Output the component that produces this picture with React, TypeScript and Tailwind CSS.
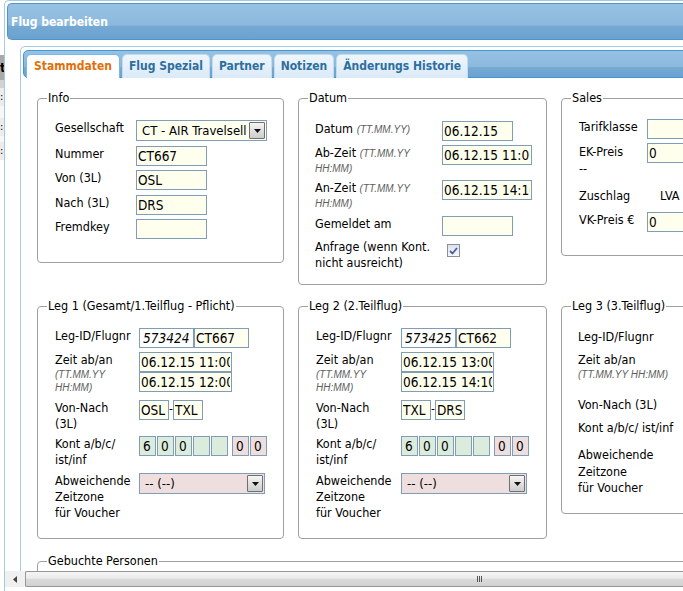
import React from "react";

const HINT = "font-['Liberation_Sans',Arial,sans-serif] [font-stretch:normal] italic text-[10px] text-[#5e5e5e]";
const BOX = "h-[20px] shrink-0 border border-[#7f9db9] px-[1px] text-[13.5px] leading-[18px] text-black outline-none";
const YEL = "bg-[#ffffee]";
const GRN = "bg-[#dcecdc]";
const PNK = "bg-[#efdede]";
const HEAD = "bg-[linear-gradient(to_bottom,#96c1e3_0%,#8bb9dd_60%,#74a9d3_64%,#6aa2cf_100%)]";

function Field({ value = "", className = "" }: { value?: string; className?: string }) {
  return <input readOnly value={value} className={`${BOX} ${className}`} />;
}

function Select({ text, className = "" }: { text: string; className?: string }) {
  return (
    <div className={`h-[21px] shrink-0 flex items-center border border-[#7f9db9] ${className}`}>
      <span className="flex-1 min-w-0 overflow-hidden whitespace-nowrap pl-[5px] text-[13px] leading-[19px]">{text}</span>
      <span className="w-[16px] h-[17px] mr-[1px] shrink-0 flex items-center justify-center border border-[#6f6f6f] rounded-[1px] bg-[linear-gradient(to_bottom,#f6f6f6,#e0e0e0_50%,#cdcdcd)]">
        <svg width="7" height="4" viewBox="0 0 7 4">
          <path d="M0 0h7L3.5 4z" fill="#111" />
        </svg>
      </span>
    </div>
  );
}

function Row({
  label,
  lw,
  className = "",
  children,
}: {
  label: React.ReactNode;
  lw: string;
  className?: string;
  children?: React.ReactNode;
}) {
  return (
    <div className={`flex items-start ${className}`}>
      <div className={`${lw} shrink-0 whitespace-nowrap leading-[16px]`}>{label}</div>
      {children}
    </div>
  );
}

function Box({ legend, className = "", children }: { legend: string; className?: string; children?: React.ReactNode }) {
  return (
    <fieldset className={`shrink-0 min-w-0 border border-[#a0a0a0] rounded-[4px] ${className}`}>
      <legend className="ml-[9px] px-[1px] text-[12.5px] leading-[16px] whitespace-nowrap">{legend}</legend>
      {children}
    </fieldset>
  );
}

function Leg({
  legend,
  lw,
  id,
  nr,
  ab,
  an,
  von,
  nach,
  className = "",
}: {
  legend: string;
  lw: string;
  id: string;
  nr: string;
  ab: string;
  an: string;
  von: string;
  nach: string;
  className?: string;
}) {
  return (
    <Box legend={legend} className={`h-[241px] ${className}`}>
      <div className="pl-[17px] flex flex-col">
        <Row lw={lw} className="mt-[14px]" label="Leg-ID/Flugnr">
          <Field value={id} className="w-[55px] bg-white italic text-[#666] pl-[3px]" />
          <Field value={nr} className={`w-[55px] ${YEL}`} />
        </Row>
        <Row
          lw={lw}
          className="mt-[4px]"
          label={
            <>
              <div>Zeit ab/an</div>
              <div className={`${HINT} leading-[13px]`}>(TT.MM.YY</div>
              <div className={`${HINT} leading-[13px]`}>HH:MM)</div>
            </>
          }
        >
          <div className="flex flex-col">
            <Field value={ab} className={`w-[93px] ${YEL}`} />
            <Field value={an} className={`w-[93px] ${YEL}`} />
          </div>
        </Row>
        <Row lw={lw} className="mt-[6px]" label={<>Von-Nach<br />(3L)</>}>
          <Field value={von} className={`w-[30px] ${YEL}`} />
          <span className="w-[4px] text-center text-[12px] leading-[18px]">-</span>
          <Field value={nach} className={`w-[30px] ${YEL}`} />
        </Row>
        <Row lw={lw} className="mt-[4px]" label={<>Kont a/b/c/<br />ist/inf</>}>
          <div className="flex gap-[1px]">
            {["6", "0", "0", "", ""].map((v, i) => (
              <Field key={i} value={v} className={`w-[17px] px-[3px] ${GRN}`} />
            ))}
          </div>
          <div className="flex gap-[1px] ml-[4px]">
            {["0", "0"].map((v, i) => (
              <Field key={i} value={v} className={`w-[17px] px-[3px] ${PNK}`} />
            ))}
          </div>
        </Row>
        <Row lw={lw} className="mt-[5px]" label={<>Abweichende<br />Zeitzone<br />für Voucher</>}>
          <Select text="-- (--)" className={`w-[126px] ${PNK}`} />
        </Row>
      </div>
    </Box>
  );
}

const tabs = ["Stammdaten", "Flug Spezial", "Partner", "Notizen", "Änderungs Historie"];

export default function App() {
  return (
    <div className="w-[683px] h-[591px] overflow-hidden bg-white flex text-black text-[12.5px] font-['DejaVu_Sans_Condensed','DejaVu_Sans',sans-serif] [font-stretch:condensed]">
      {/* page behind the dialog */}
      <div className="w-[4px] shrink-0 flex flex-col overflow-hidden text-[11px]">
        <div className="h-[55px] bg-white" />
        <div className="h-[25px] bg-[#a9a9a9] font-bold text-[13px] leading-[25px]">t</div>
        <div className="h-[8px] bg-[#d2d2d2]" />
        <div className="h-[18px] bg-[#ececec] leading-[18px]">:</div>
        <div className="h-[12px] bg-[#f7f7f7]" />
        <div className="h-[18px] bg-[#ececec] leading-[18px]">:</div>
        <div className="h-[6px] bg-[#f7f7f7]" />
        <div className="h-[18px] bg-[#ececec] leading-[18px]">:</div>
      </div>

      {/* dialog */}
      <div className="flex-1 min-w-0 flex flex-col border-l border-t border-[#a6c9e2] rounded-tl-[5px] pt-[2px] bg-white">
        <div className={`ml-[2px] h-[37px] shrink-0 flex items-center pl-[3px] border border-r-0 border-[#4f94cf] rounded-l-[5px] ${HEAD} text-white font-bold text-[12px]`}>
          Flug bearbeiten
        </div>

        <div className="h-[531px] shrink-0 overflow-hidden pl-[15px] pt-[6px]">
          <div className="w-[900px] h-[600px] border border-[#a6c9e2] rounded-[5px] pt-[3px] px-[2px] bg-white">
            <div className={`h-[28px] border border-[#4297d7] rounded-[5px] ${HEAD} flex items-end gap-[2px] pl-[2px]`}>
              {tabs.map((t, i) =>
                i === 0 ? (
                  <div
                    key={t}
                    className="h-[24px] -mb-[1px] px-[7px] border border-b-0 border-[#79b7e7] rounded-t-[5px] bg-white text-[#e17009] font-bold text-[12px] leading-[22px]"
                  >
                    {t}
                  </div>
                ) : (
                  <div
                    key={t}
                    className="h-[24px] -mb-[1px] px-[6px] border border-b-0 border-[#c5dbec] rounded-t-[5px] bg-[linear-gradient(to_bottom,#eef6fd,#dbeaf8)] text-[#2e6e9e] font-bold text-[12px] leading-[22px]"
                  >
                    {t}
                  </div>
                )
              )}
            </div>

            <div className="pl-[14px] pt-[12px]">
              <div className="flex items-start">
                <Box legend="Info" className="w-[247px] h-[173px]">
                  <div className="pl-[17px] flex flex-col">
                    <Row lw="w-[81px]" className="mt-[14px]" label="Gesellschaft">
                      <Select text="CT - AIR Travelsell" className={`w-[131px] ${YEL}`} />
                    </Row>
                    <Row lw="w-[81px]" className="mt-[5px]" label="Nummer">
                      <Field value="CT667" className={`w-[71px] ${YEL}`} />
                    </Row>
                    <Row lw="w-[81px]" className="mt-[4px]" label="Von (3L)">
                      <Field value="OSL" className={`w-[71px] ${YEL}`} />
                    </Row>
                    <Row lw="w-[81px]" className="mt-[5px]" label="Nach (3L)">
                      <Field value="DRS" className={`w-[71px] ${YEL}`} />
                    </Row>
                    <Row lw="w-[81px]" className="mt-[4px]" label="Fremdkey">
                      <Field className={`w-[71px] ${YEL}`} />
                    </Row>
                  </div>
                </Box>

                <Box legend="Datum" className="ml-[14px] w-[249px] h-[195px]">
                  <div className="pl-[16px] flex flex-col">
                    <Row lw="w-[127px]" className="mt-[15px]" label={<>Datum <span className={HINT}>(TT.MM.YY)</span></>}>
                      <Field value="06.12.15" className={`w-[71px] ${YEL}`} />
                    </Row>
                    <Row
                      lw="w-[127px]"
                      className="mt-[4px]"
                      label={
                        <>
                          <div>Ab-Zeit <span className={HINT}>(TT.MM.YY</span></div>
                          <div className={`${HINT} leading-[13px]`}>HH:MM)</div>
                        </>
                      }
                    >
                      <Field value="06.12.15 11:00" className={`w-[90px] ${YEL}`} />
                    </Row>
                    <Row
                      lw="w-[127px]"
                      className="mt-[5px]"
                      label={
                        <>
                          <div>An-Zeit <span className={HINT}>(TT.MM.YY</span></div>
                          <div className={`${HINT} leading-[13px]`}>HH:MM)</div>
                        </>
                      }
                    >
                      <Field value="06.12.15 14:10" className={`w-[90px] ${YEL}`} />
                    </Row>
                    <Row lw="w-[127px]" className="mt-[6px]" label="Gemeldet am">
                      <Field className={`w-[71px] ${YEL}`} />
                    </Row>
                    <Row
                      lw="w-[127px]"
                      className="mt-[3px]"
                      label={<div className="leading-[16px]">Anfrage (wenn Kont.<br />nicht ausreicht)</div>}
                    >
                      <span className="mt-[5px] ml-[5px] w-[13px] h-[13px] shrink-0 border border-[#8e8f8f] bg-[linear-gradient(to_bottom,#dbe4ef,#f4f7fb)] flex items-center justify-center">
                        <svg width="9" height="8" viewBox="0 0 9 8">
                          <path d="M1 4l2.5 2.5L8 1" fill="none" stroke="#4a5f97" strokeWidth="1.8" />
                        </svg>
                      </span>
                    </Row>
                  </div>
                </Box>

                <Box legend="Sales" className="ml-[14px] w-[200px] h-[166px]">
                  <div className="pl-[17px] flex flex-col">
                    <Row lw="w-[68px]" className="mt-[13px]" label="Tarifklasse">
                      <Field className={`w-[80px] ${YEL}`} />
                    </Row>
                    <Row lw="w-[68px]" className="mt-[4px]" label={<div className="leading-[17px]">EK-Preis<br />--</div>}>
                      <Field value="0" className={`w-[80px] ${YEL}`} />
                    </Row>
                    <Row lw="w-[68px]" className="mt-[11px]" label="Zuschlag">
                      <span className="ml-[13px] leading-[16px]">LVA</span>
                    </Row>
                    <Row lw="w-[68px]" className="mt-[8px]" label="VK-Preis €">
                      <Field value="0" className={`w-[80px] ${YEL}`} />
                    </Row>
                  </div>
                </Box>
              </div>

              <div className="flex items-start mt-[13px]">
                <Leg
                  legend="Leg 1 (Gesamt/1.Teilflug - Pflicht)"
                  lw="w-[84px]"
                  className="w-[247px]"
                  id="573424"
                  nr="CT667"
                  ab="06.12.15 11:00"
                  an="06.12.15 12:00"
                  von="OSL"
                  nach="TXL"
                />
                <Leg
                  legend="Leg 2 (2.Teilflug)"
                  lw="w-[85px]"
                  className="ml-[14px] w-[249px]"
                  id="573425"
                  nr="CT662"
                  ab="06.12.15 13:00"
                  an="06.12.15 14:10"
                  von="TXL"
                  nach="DRS"
                />
                <Box legend="Leg 3 (3.Teilflug)" className="ml-[14px] w-[200px] h-[216px]">
                  <div className="pl-[16px] flex flex-col whitespace-nowrap">
                    <div className="mt-[15px] leading-[16px]">Leg-ID/Flugnr</div>
                    <div className="mt-[7px] leading-[16px]">Zeit ab/an</div>
                    <div className={`${HINT} leading-[13px]`}>(TT.MM.YY HH:MM)</div>
                    <div className="mt-[16px] leading-[16px]">Von-Nach (3L)</div>
                    <div className="mt-[7px] leading-[16px]">Kont a/b/c/ ist/inf</div>
                    <div className="mt-[11px] leading-[16.5px]">
                      Abweichende<br />Zeitzone<br />für Voucher
                    </div>
                  </div>
                </Box>
              </div>

              <div className="flex mt-[14px]">
                <Box legend="Gebuchte Personen" className="w-[860px] h-[100px]" />
              </div>
            </div>
          </div>
        </div>

        {/* horizontal scrollbar */}
        <div className="h-[16px] shrink-0 flex bg-[#f0f0f0]">
          <div className="w-[20px] shrink-0 flex items-center justify-center">
            <svg width="4" height="7" viewBox="0 0 4 7">
              <path d="M4 0v7L0 3.5z" fill="#444" />
            </svg>
          </div>
          <div className="flex-1 flex items-center border border-r-0 border-[#979797] rounded-l-[2px] bg-[linear-gradient(to_bottom,#f5f5f5_0%,#ebebeb_45%,#dadada_50%,#d2d2d2_100%)] pl-[451px]">
            <div className="flex gap-[1px]">
              <span className="w-[1px] h-[6px] bg-[#555]" />
              <span className="w-[1px] h-[6px] bg-[#555]" />
              <span className="w-[1px] h-[6px] bg-[#555]" />
            </div>
          </div>
        </div>
        <div className="flex-1 bg-white" />
      </div>
    </div>
  );
}
